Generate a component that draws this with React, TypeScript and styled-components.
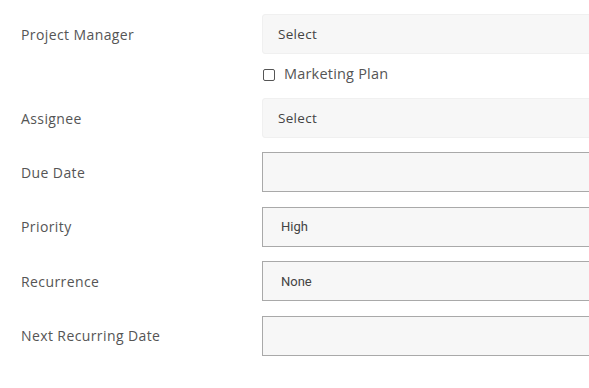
import React from "react";
import styled, { createGlobalStyle } from "styled-components";

const Global = createGlobalStyle`
  html, body { margin: 0; padding: 0; background: #ffffff; overflow: hidden; }
  body { font-family: "Open Sans", "Liberation Sans", sans-serif; }
`;

const Form = styled.div`
  width: 589px;
  overflow: hidden;
  padding-top: 14px;
  display: flex;
  flex-direction: column;
`;

const Row = styled.div<{ $gap?: number }>`
  display: grid;
  grid-template-columns: 262px 360px;
  align-items: center;
  margin-bottom: ${(p) => p.$gap ?? 14.5}px;
`;

const Label = styled.label`
  padding-left: 21px;
  font-family: "Open Sans", "Liberation Sans", sans-serif;
  font-size: 14px;
  color: #555555;
  letter-spacing: 0.4px;
`;

const SelectBox = styled.div`
  box-sizing: border-box;
  height: 40px;
  background: #f7f7f7;
  border: 1px solid #f0f0f0;
  border-radius: 3px;
  padding-left: 15px;
  display: flex;
  align-items: center;
  font-family: "Open Sans", "Liberation Sans", sans-serif;
  font-size: 13.5px;
  letter-spacing: 0.3px;
  color: #444444;
`;

const Field = styled.div`
  box-sizing: border-box;
  height: 40px;
  background: #f7f7f7;
  border: 1px solid #a9a9a9;
  border-right: none;
  padding-left: 18px;
  display: flex;
  align-items: center;
  font-family: Roboto, "Liberation Sans", sans-serif;
  font-size: 13px;
  color: #444444;
`;

const CheckRow = styled.div`
  display: grid;
  grid-template-columns: 262px auto;
  height: 44px;
  align-items: center;
`;

const CheckLabel = styled.label`
  grid-column: 2;
  display: flex;
  align-items: center;
  gap: 9px;
  font-family: "Open Sans", "Liberation Sans", sans-serif;
  font-size: 14.5px;
  letter-spacing: 0.2px;
  color: #555555;
  padding-bottom: 5px;
`;

const Box = styled.span`
  box-sizing: border-box;
  width: 12px;
  height: 12px;
  border: 1px solid #555;
  border-radius: 2px;
  background: #fff;
  margin-left: 1px;
  margin-top: 2px;
`;

export default function App() {
  return (
    <>
      <Global />
      <Form>
        <Row $gap={0}>
          <Label>Project Manager</Label>
          <SelectBox>Select</SelectBox>
        </Row>
        <CheckRow>
          <CheckLabel>
            <Box />
            Marketing Plan
          </CheckLabel>
        </CheckRow>
        <Row $gap={14}>
          <Label>Assignee</Label>
          <SelectBox>Select</SelectBox>
        </Row>
        <Row>
          <Label>Due Date</Label>
          <Field />
        </Row>
        <Row>
          <Label>Priority</Label>
          <Field>High</Field>
        </Row>
        <Row>
          <Label>Recurrence</Label>
          <Field>None</Field>
        </Row>
        <Row>
          <Label>Next Recurring Date</Label>
          <Field />
        </Row>
      </Form>
    </>
  );
}
